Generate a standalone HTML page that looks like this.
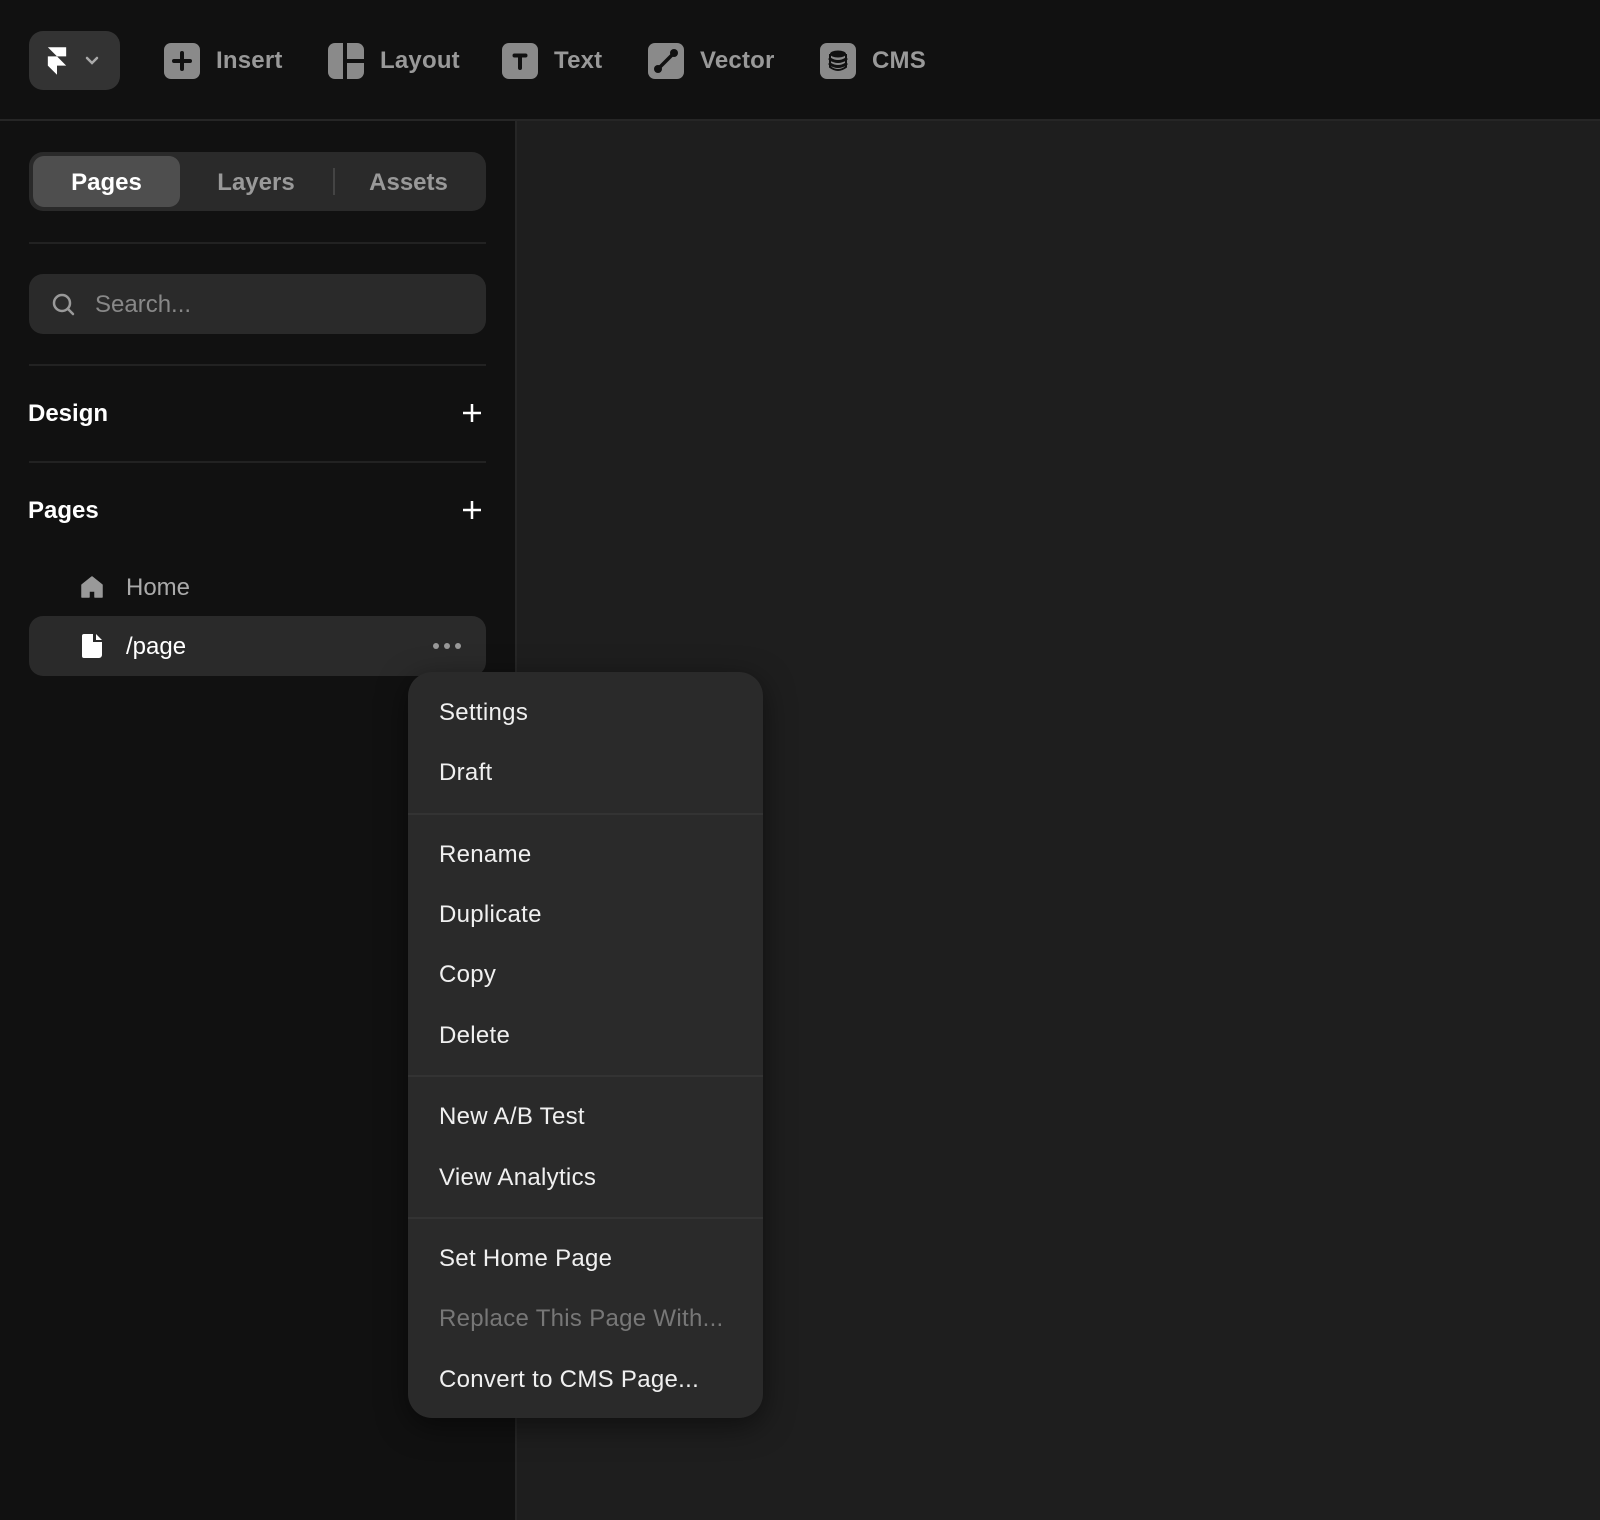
<!DOCTYPE html>
<html><head><meta charset="utf-8"><style>
*{margin:0;padding:0;box-sizing:border-box}
body{width:1600px;height:1520px;background:#1e1e1e;font-family:"Liberation Sans",Arial,sans-serif;position:relative;overflow:hidden}
.top{position:absolute;left:0;top:0;width:1600px;height:121px;background:#111;border-bottom:2px solid #262626}
.side{position:absolute;left:0;top:121px;width:517px;height:1399px;background:#111;border-right:2px solid #262626}
.abs{position:absolute}
.tool{position:absolute;top:43px;height:36px;display:flex;align-items:center;color:#999;font-size:24px;font-weight:bold;letter-spacing:0.2px}
.tool svg{margin-right:16px}
.t{position:absolute;font-size:24px;line-height:30px;white-space:nowrap}
.div{position:absolute;left:29px;width:457px;height:2px;background:#222}
.menu{position:absolute;left:408px;top:672px;width:355px;height:746px;background:#2a2a2a;border-radius:24px;box-shadow:0 8px 30px rgba(0,0,0,.5)}
.mi{position:absolute;left:31px;font-size:24px;color:#f0f0f0;letter-spacing:0.3px;line-height:30px}
.ms{position:absolute;left:0;width:355px;height:2px;background:#333}
</style></head><body>
<div class="top">
  <div class="abs" style="left:29px;top:31px;width:91px;height:59px;background:#333;border-radius:14px">
    <svg class="abs" style="left:17px;top:15px" width="22" height="30" viewBox="0 0 24 32"><path d="M2 1H22V11H12ZM2 11H12L22 21H12V31L2 21Z" fill="#fff"/></svg>
    <svg class="abs" style="left:56px;top:25px" width="14" height="10" viewBox="0 0 14 10"><path d="M2 2L7 7L12 2" stroke="#aaa" stroke-width="2.5" fill="none" stroke-linecap="round"/></svg>
  </div>
  <div class="tool" style="left:164px"><svg width="36" height="36" viewBox="0 0 36 36"><rect width="36" height="36" rx="7" fill="#8a8a8a"/><path d="M18 10V26M10 18H26" stroke="#111" stroke-width="4" stroke-linecap="round"/></svg>Insert</div>
  <div class="tool" style="left:328px"><svg width="36" height="36" viewBox="0 0 36 36"><path d="M7 0H15V36H7A7 7 0 0 1 0 29V7A7 7 0 0 1 7 0Z" fill="#8a8a8a"/><path d="M19 0H29A7 7 0 0 1 36 7V16H19Z" fill="#8a8a8a"/><path d="M19 20H36V29A7 7 0 0 1 29 36H19Z" fill="#8a8a8a"/></svg>Layout</div>
  <div class="tool" style="left:502px"><svg width="36" height="36" viewBox="0 0 36 36"><rect width="36" height="36" rx="7" fill="#8a8a8a"/><path d="M12.5 12.5H23.5M18 12.5V25" stroke="#111" stroke-width="4" stroke-linecap="round"/></svg>Text</div>
  <div class="tool" style="left:648px"><svg width="36" height="36" viewBox="0 0 36 36"><rect width="36" height="36" rx="7" fill="#8a8a8a"/><path d="M11 25L25 11" stroke="#111" stroke-width="3.5"/><circle cx="10" cy="26" r="4" fill="#111"/><circle cx="26" cy="10" r="4" fill="#111"/></svg>Vector</div>
  <div class="tool" style="left:820px"><svg width="36" height="36" viewBox="0 0 36 36"><rect width="36" height="36" rx="7" fill="#8a8a8a"/><ellipse cx="18" cy="11" rx="8" ry="3.5" fill="#111"/><path d="M10 16Q18 21 26 16M10 21Q18 26 26 21" stroke="#111" stroke-width="3" fill="none" stroke-linecap="round"/><path d="M10 11V24Q18 30 26 24V11" stroke="#111" stroke-width="2" fill="none"/></svg>CMS</div>
</div>
<div class="side">
  <div class="abs" style="left:29px;top:31px;width:457px;height:59px;background:#2a2a2a;border-radius:14px">
    <div class="abs" style="left:4px;top:4px;width:147px;height:51px;background:#4e4e4e;border-radius:11px"></div>
    <div class="abs" style="left:304px;top:16px;width:2px;height:27px;background:#444"></div>
    <div class="t" style="left:4px;width:147px;top:16px;text-align:center;color:#fff;font-weight:bold">Pages</div>
    <div class="t" style="left:152px;width:150px;top:16px;text-align:center;color:#999;font-weight:bold">Layers</div>
    <div class="t" style="left:306px;width:147px;top:16px;text-align:center;color:#999;font-weight:bold">Assets</div>
  </div>
  <div class="div" style="top:121px"></div>
  <div class="abs" style="left:29px;top:153px;width:457px;height:60px;background:#2a2a2a;border-radius:14px">
    <svg class="abs" style="left:22px;top:18px" width="26" height="26" viewBox="0 0 26 26"><circle cx="11" cy="11" r="8" stroke="#999" stroke-width="2.5" fill="none"/><path d="M17 17L22 22" stroke="#999" stroke-width="2.5" stroke-linecap="round"/></svg>
    <div class="t" style="left:66px;top:16px;color:#888">Search...</div>
  </div>
  <div class="div" style="top:243px"></div>
  <div class="t" style="left:28px;top:278px;color:#fff;font-weight:bold">Design</div>
  <svg class="abs" style="left:462px;top:282px" width="20" height="20" viewBox="0 0 20 20"><path d="M10 1V19M1 10H19" stroke="#fff" stroke-width="2.5"/></svg>
  <div class="div" style="top:340px"></div>
  <div class="t" style="left:28px;top:375px;color:#fff;font-weight:bold">Pages</div>
  <svg class="abs" style="left:462px;top:379px" width="20" height="20" viewBox="0 0 20 20"><path d="M10 1V19M1 10H19" stroke="#fff" stroke-width="2.5"/></svg>
  <svg class="abs" style="left:81px;top:455px" width="22" height="22" viewBox="0 0 22 22"><path d="M11 1L21 9V21H14V15H8V21H1V9Z" fill="#999" stroke="#999" stroke-linejoin="round" stroke-width="1.5"/></svg>
  <div class="t" style="left:126px;top:452px;color:#aaa">Home</div>
  <div class="abs" style="left:29px;top:495px;width:457px;height:60px;background:#2a2a2a;border-radius:14px">
    <svg class="abs" style="left:52px;top:17px" width="22" height="26" viewBox="0 0 22 26"><path d="M3 1H12V9H21V22A3 3 0 0 1 18 25H3A2 2 0 0 1 1 23V3A2 2 0 0 1 3 1ZM15 1L21 7H15Z" fill="#fff"/></svg>
    <div class="t" style="left:97px;top:16px;color:#fff">/page</div>
    <svg class="abs" style="left:403px;top:26px" width="30" height="8" viewBox="0 0 30 8"><circle cx="4" cy="4" r="3" fill="#999"/><circle cx="15" cy="4" r="3" fill="#999"/><circle cx="26" cy="4" r="3" fill="#999"/></svg>
  </div>
</div>
<div class="menu">
  <div class="mi" style="top:26px">Settings</div>
  <div class="mi" style="top:86px">Draft</div>
  <div class="ms" style="top:141px"></div>
  <div class="mi" style="top:168px">Rename</div>
  <div class="mi" style="top:228px">Duplicate</div>
  <div class="mi" style="top:288px">Copy</div>
  <div class="mi" style="top:349px">Delete</div>
  <div class="ms" style="top:403px"></div>
  <div class="mi" style="top:430px">New A/B Test</div>
  <div class="mi" style="top:491px">View Analytics</div>
  <div class="ms" style="top:545px"></div>
  <div class="mi" style="top:572px">Set Home Page</div>
  <div class="mi" style="top:632px;color:#777">Replace This Page With...</div>
  <div class="mi" style="top:693px">Convert to CMS Page...</div>
</div>
</body></html>
